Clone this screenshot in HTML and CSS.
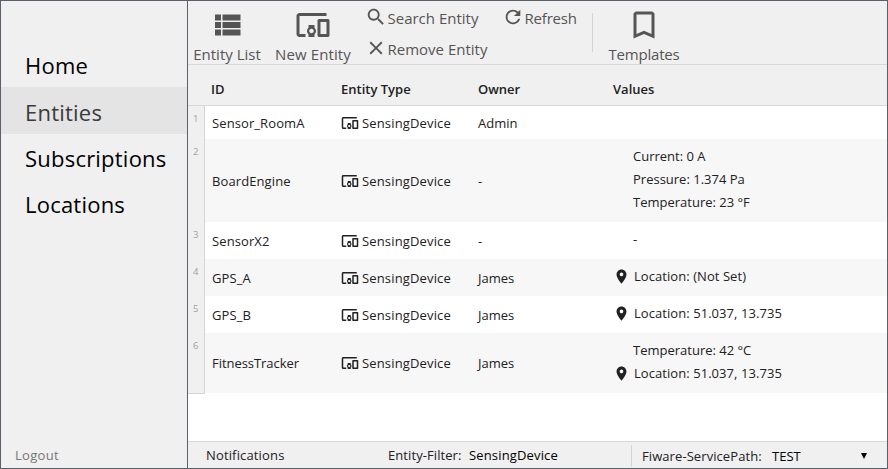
FILE: index.html
```html
<!DOCTYPE html>
<html lang="en">
<head>
<meta charset="utf-8">
<title>Entities</title>
<link rel="stylesheet" href="styles.css">
</head>
<body>
<svg width="0" height="0" class="defs">
  <symbol id="list" viewBox="0 0 24 24"><path d="M4 14h4v-4H4v4zm0 5h4v-4H4v4zM4 9h4V5H4v4zm5 5h12v-4H9v4zm0 5h12v-4H9v4zM9 5v4h12V5H9z"/></symbol>
  <symbol id="devices" viewBox="0 0 24 24"><path d="M3 6h18V4H3c-1.1 0-2 .9-2 2v12c0 1.1.9 2 2 2h4v-2H3V6zm10 6H9v1.78c-.61.55-1 1.33-1 2.22s.39 1.67 1 2.22V20h4v-1.78c.61-.55 1-1.34 1-2.22s-.39-1.67-1-2.22V12zm-2 5.5c-.83 0-1.5-.67-1.5-1.5s.67-1.5 1.5-1.5 1.5.67 1.5 1.5-.67 1.5-1.5 1.5zM22 8h-6c-.5 0-1 .5-1 1v10c0 .5.5 1 1 1h6c.5 0 1-.5 1-1V9c0-.5-.5-1-1-1zm-1 10h-4v-8h4v8z"/></symbol>
  <symbol id="search" viewBox="0 0 24 24"><path d="M15.5 14h-.79l-.28-.27C15.41 12.59 16 11.11 16 9.5 16 5.91 13.09 3 9.5 3S3 5.91 3 9.5 5.91 16 9.5 16c1.61 0 3.09-.59 4.23-1.57l.27.28v.79l5 4.99L20.49 19l-4.99-5zm-6 0C7.01 14 5 11.99 5 9.5S7.01 5 9.5 5 14 7.01 14 9.5 11.99 14 9.5 14z"/></symbol>
  <symbol id="close" viewBox="0 0 24 24"><path d="M19 6.41L17.59 5 12 10.59 6.41 5 5 6.41 10.59 12 5 17.59 6.41 19 12 13.41 17.59 19 19 17.59 13.41 12z"/></symbol>
  <symbol id="refresh" viewBox="0 0 24 24"><path d="M17.65 6.35C16.2 4.9 14.21 4 12 4c-4.42 0-7.99 3.58-7.99 8s3.57 8 7.99 8c3.73 0 6.84-2.55 7.73-6h-2.08c-.82 2.33-3.04 4-5.65 4-3.31 0-6-2.69-6-6s2.69-6 6-6c1.66 0 3.14.69 4.22 1.78L13 11h7V4l-2.35 2.35z"/></symbol>
  <symbol id="bookmark" viewBox="0 0 24 24"><path d="M17 3H7c-1.1 0-1.99.9-1.99 2L5 21l7-3 7 3V5c0-1.1-.9-2-2-2zm0 15l-5-2.18L7 18V5h10v13z"/></symbol>
  <symbol id="place" viewBox="0 0 24 24"><path d="M12 2C8.13 2 5 5.13 5 9c0 5.25 7 13 7 13s7-7.75 7-13c0-3.87-3.13-7-7-7zm0 9.5c-1.38 0-2.5-1.12-2.5-2.5s1.12-2.5 2.5-2.5 2.5 1.12 2.5 2.5-1.12 2.5-2.5 2.5z"/></symbol>
</svg>
<div class="app">
  <aside class="sidebar">
    <nav>
      <a class="nav-item">Home</a>
      <a class="nav-item active">Entities</a>
      <a class="nav-item">Subscriptions</a>
      <a class="nav-item">Locations</a>
    </nav>
    <a class="logout">Logout</a>
  </aside>
  <main class="main">
    <header class="toolbar">
      <button class="big list"><svg><use href="#list"/></svg><span>Entity List</span></button>
      <button class="big new"><svg><use href="#devices"/></svg><span>New Entity</span></button>
      <div class="small-group">
        <button class="small"><svg><use href="#search"/></svg><span>Search Entity</span></button>
        <button class="small remove"><svg><use href="#close"/></svg><span>Remove Entity</span></button>
      </div>
      <button class="small refresh"><svg><use href="#refresh"/></svg><span>Refresh</span></button>
      <i class="divider"></i>
      <button class="big templates"><svg><use href="#bookmark"/></svg><span>Templates</span></button>
    </header>
    <section class="table">
      <div class="thead"><span>ID</span><span class="h-type">Entity Type</span><span>Owner</span><span>Values</span></div>
      <div class="row first"><span class="num">1</span><span class="id">Sensor_RoomA</span><span class="type"><svg><use href="#devices"/></svg><span>SensingDevice</span></span><span class="owner">Admin</span><div class="values"></div></div>
      <div class="row alt"><span class="num">2</span><span class="id">BoardEngine</span><span class="type"><svg><use href="#devices"/></svg><span>SensingDevice</span></span><span class="owner">-</span><div class="values"><p><span>Current: 0 A</span></p><p><span>Pressure: 1.374 Pa</span></p><p><span>Temperature: 23 °F</span></p></div></div>
      <div class="row"><span class="num">3</span><span class="id">SensorX2</span><span class="type"><svg><use href="#devices"/></svg><span>SensingDevice</span></span><span class="owner">-</span><div class="values"><p><span>-</span></p></div></div>
      <div class="row alt"><span class="num">4</span><span class="id">GPS_A</span><span class="type"><svg><use href="#devices"/></svg><span>SensingDevice</span></span><span class="owner">James</span><div class="values"><p class="loc"><svg><use href="#place"/></svg><span>Location: (Not Set)</span></p></div></div>
      <div class="row"><span class="num">5</span><span class="id">GPS_B</span><span class="type"><svg><use href="#devices"/></svg><span>SensingDevice</span></span><span class="owner">James</span><div class="values"><p class="loc"><svg><use href="#place"/></svg><span>Location: 51.037, 13.735</span></p></div></div>
      <div class="row alt last"><span class="num">6</span><span class="id">FitnessTracker</span><span class="type"><svg><use href="#devices"/></svg><span>SensingDevice</span></span><span class="owner">James</span><div class="values"><p><span>Temperature: 42 °C</span></p><p class="loc"><svg><use href="#place"/></svg><span>Location: 51.037, 13.735</span></p></div></div>
    </section>
    <footer class="status">
      <span class="notifications">Notifications</span>
      <span class="filter">Entity-Filter:</span>
      <span class="filter-value">SensingDevice</span>
      <div class="path"><span class="path-label">Fiware-ServicePath:</span><span class="path-value">TEST</span><svg class="caret" viewBox="0 0 6 6"><path d="M0 0h6L3 6z"/></svg></div>
    </footer>
  </main>
</div>
</body>
</html>
```
FILE: styles.css
```css
* { box-sizing: border-box; }
body { margin: 0; font: 13px/18px "Open Sans", "Noto Sans", sans-serif; color: #212121; }
svg { fill: currentColor; flex: none; display: block; }
.defs { position: absolute; }
p { margin: 0; }
button { border: 0; padding: 0; background: none; font: inherit; color: inherit; }
.app { width: 888px; height: 469px; border: 1px solid #5a5f69; display: flex; background: #fff; }

.sidebar { width: 187px; background: #f0f0f0; border-right: 1px solid #5a5f69; display: flex; flex-direction: column; justify-content: space-between; padding: 40px 0 4px; }
.nav-item { display: block; height: 46px; line-height: 48px; padding-left: 24px; font-size: 22px; letter-spacing: 0.22px; color: #000; white-space: nowrap; }
.nav-item.active { height: 47px; line-height: 50px; background: #e4e4e4; color: #3b3b3b; }
.logout { padding-left: 14px; color: #777; letter-spacing: 0.3px; }

.main { flex: 1; min-width: 0; display: flex; flex-direction: column; }
.toolbar { height: 64px; background: #f0f0f0; border-bottom: 1px solid #d8d8d8; display: flex; color: #555; font-size: 15px; line-height: 20px; white-space: nowrap; }
.big { display: flex; flex-direction: column; align-items: center; padding-top: 6px; }
.big svg { width: 36px; height: 36px; margin-bottom: 1px; }
.list { width: 68px; margin-left: 5px; }
.new { width: 76px; margin-left: 14px; letter-spacing: 0.1px; }
.small-group { width: 137px; margin-left: 14px; padding-top: 5px; display: flex; flex-direction: column; gap: 9px; }
.small { display: flex; align-items: center; height: 22px; }
.small svg { width: 22px; height: 22px; }
.small span { padding: 1px 0 0 0.5px; }
.refresh { width: 90px; margin-top: 5px; letter-spacing: -0.2px; }
.divider { width: 1px; height: 39px; margin-top: 12px; background: #d4d4d4; }
.templates { width: 70px; margin-left: 16px; letter-spacing: -0.2px; }

.table { flex: 1; }
.thead, .row { display: grid; grid-template-columns: 17px 136px 137px 135px 1fr; }
.thead { grid-template-columns: 153px 137px 135px 1fr; height: 41px; background: #f0f0f0; border-bottom: 1px solid #d8d8d8; font-weight: 600; line-height: 49px; }
.thead span:first-child { padding-left: 23px; }
.row { height: 37px; align-items: center; }
.row.alt { background: #f7f7f7; }
.row.first { height: 33px; }
.row:has(p + p) { height: 60px; }
.row:has(p + p + p) { height: 83px; }
.num { align-self: stretch; background: #f0f0f0; border-right: 1px solid #d4d4d4; color: #a0a0a0; font-size: 9.5px; line-height: 25px; padding-left: 5px; }
.last .num { height: 61px; border-bottom: 1px solid #d4d4d4; }
.last .id, .last .type, .last .owner { padding-bottom: 2px; }
.id { padding-left: 7px; letter-spacing: 0.1px; }
.last .id { letter-spacing: -0.05px; }
.type { display: flex; align-items: center; gap: 3px; letter-spacing: 0.15px; }
.type svg { width: 18px; height: 18px; }
.loc svg { width: 17px; height: 17px; }
.values { align-self: start; padding-top: 6px; }
.values p { height: 23px; line-height: 23px; padding-left: 20px; }
.values .loc { display: flex; align-items: center; gap: 4px; padding-left: 0; letter-spacing: 0.06px; }

.status { height: 27px; background: #f0f0f0; border-top: 1px solid #d8d8d8; display: flex; line-height: 27px; white-space: nowrap; color: #212121; }
.notifications { width: 182px; margin-left: 18px; letter-spacing: 0.15px; }
.filter { width: 80px; letter-spacing: 0.08px; }
.filter-value { width: 163px; padding-left: 1px; letter-spacing: 0.15px; color: #000; }
.path { flex: 1; height: 22px; margin-top: 3px; border-left: 1px solid #d4d4d4; line-height: 22px; display: flex; align-items: center; padding-left: 10px; }
.path-label { width: 130px; letter-spacing: 0.08px; }
.path-value { width: 89px; color: #000; }
.caret { width: 6px; height: 6px; color: #000; }
```
